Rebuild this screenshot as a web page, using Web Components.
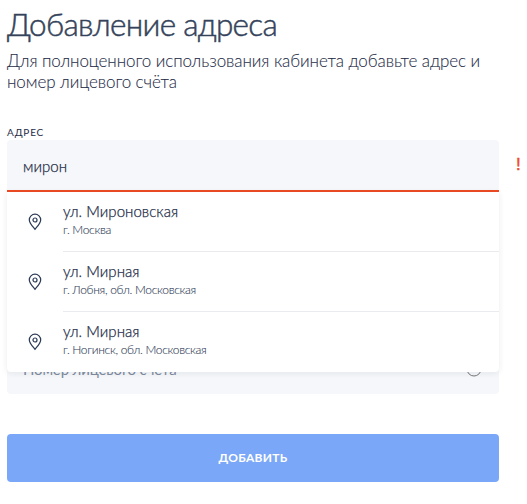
<!DOCTYPE html>
<html lang="ru">
<head>
<meta charset="utf-8">
<title>Добавление адреса</title>
<style>
  body{
    margin:0;
    background-color:#fff;
    color:#1f2d48;
    font-family:Lato, "Open Sans", sans-serif;
    font-weight:300;
  }
</style>
</head>
<body>
  <address-page>
    <page-heading slot="heading">
      Добавление адреса
      <span slot="text">Для полноценного использования кабинета добавьте адрес и номер лицевого счёта</span>
    </page-heading>
    <address-field label="Адрес" value="мирон">
      <address-option>ул. Мироновская<span slot="place">г. Москва</span></address-option>
      <address-option>ул. Мирная<span slot="place">г. Лобня, обл. Московская</span></address-option>
      <address-option>ул. Мирная<span slot="place">г. Ногинск, обл. Московская</span></address-option>
    </address-field>
    <account-field>Номер лицевого счёта</account-field>
    <submit-button slot="action">Добавить</submit-button>
  </address-page>

<script>
(function(w, doc) {
  'use strict';

  // registers an element whose shadow root is a clone of the markup
  function define(name, html, setup) {
    const template = doc.createElement('template');
    template.innerHTML = html;

    customElements.define(name, class extends HTMLElement {
      constructor() {
        super();
        this.attachShadow({ mode: 'open' });
        this.shadowRoot.appendChild(template.content.cloneNode(true));
      }

      connectedCallback() {
        if(setup) setup(this, this.shadowRoot);
      }
    });
  }

  define('address-page', `
    <style>
      :host{
        display:block;
        box-sizing:border-box;
        width:520px;
        padding:5px 21px 22px 7px;
      }
      form{
        display:flex;
        flex-direction:column;
      }
      .fields{
        margin-top:34px;
      }
      .action{
        margin-top:40px;
      }
    </style>
    <slot name="heading"></slot>
    <form>
      <div class="fields"><slot></slot></div>
      <div class="action"><slot name="action"></slot></div>
    </form>
`);

  define('page-heading', `
    <style>
      :host{
        display:block;
      }
      h1{
        margin:0;
        font-size:31.5px;
        font-weight:300;
        line-height:38px;
        letter-spacing:-0.7px;
        color:#34435a;
        -webkit-text-stroke:0.5px #34435a;
      }
      p{
        margin:7px 0 0;
        width:490px;
        font-size:17px;
        line-height:21px;
        letter-spacing:-0.08px;
        -webkit-text-stroke:0.1px #1f2d48;
      }
    </style>
    <h1><slot></slot></h1>
    <p><slot name="text"></slot></p>
`);

  define('address-field', `
    <style>
      :host{
        display:block;
      }
      label{
        display:block;
        height:14px;
        font-size:10px;
        font-weight:400;
        line-height:13px;
        letter-spacing:0.8px;
        text-transform:uppercase;
      }
      .box{
        position:relative;
        box-sizing:border-box;
        height:52px;
        border-bottom:2px solid #ee4b23;
        border-radius:4px 4px 0 0;
        background-color:#f5f7fa;
      }
      .value{
        padding:0 16px;
        font-size:15px;
        font-weight:300;
        line-height:52px;
        letter-spacing:0.05px;
        -webkit-text-stroke:0.25px #1f2d48;
      }
      .error{
        position:absolute;
        top:15px;
        left:509px;
        color:#ee4b23;
        -webkit-text-stroke:0.5px #ee4b23;
        font:17px/20px "Liberation Sans", sans-serif;
      }
      .list{
        position:absolute;
        top:52px;
        left:0;
        right:0;
        z-index:1;
        border-radius:0 0 4px 4px;
        background-color:#fff;
        box-shadow:0 1px 6px rgba(31,45,72,0.09);
      }
    </style>
    <label></label>
    <div class="box">
      <div class="value"></div>
      <div class="error">!</div>
      <div class="list"><slot></slot></div>
    </div>
`, function(host, root) {
    root.querySelector('label').innerText = host.getAttribute('label');
    root.querySelector('.value').innerText = host.getAttribute('value');
  });

  define('address-option', `
    <style>
      :host{
        display:flex;
        height:60px;
      }
      :host(:last-child) .text{
        border-bottom-color:transparent;
      }
      .icon{
        display:flex;
        align-items:center;
        justify-content:center;
        width:56px;
      }
      .text{
        box-sizing:border-box;
        flex:1;
        padding-top:9px;
        border-bottom:1px solid #e9ebee;
      }
      .street{
        margin-bottom:1px;
        font-size:15px;
        font-weight:300;
        line-height:20px;
        letter-spacing:0.05px;
        -webkit-text-stroke:0.25px #1f2d48;
      }
      .place{
        font-size:12px;
        line-height:16px;
        letter-spacing:-0.32px;
        color:#34435a;
        -webkit-text-stroke:0.1px #34435a;
      }
    </style>
    <div class="icon">
      <svg width="14" height="18" viewBox="0 0 14 18" fill="none" stroke="#2b3a55" stroke-width="1.2">
        <path d="M7 16.3C4.6 13.3 1.3 10 1.3 6.9a5.7 5.7 0 0 1 11.4 0C12.7 10 9.4 13.3 7 16.3z"/>
        <circle cx="7" cy="7" r="2"/>
      </svg>
    </div>
    <div class="text">
      <div class="street"><slot></slot></div>
      <div class="place"><slot name="place"></slot></div>
    </div>
`);

  define('account-field', `
    <style>
      :host{
        display:flex;
        align-items:center;
        justify-content:space-between;
        box-sizing:border-box;
        height:52px;
        margin-top:150px;
        padding:1px 17px 0 16px;
        border-radius:4px;
        background-color:#f5f7fa;
        font-size:15px;
        font-weight:400;
        letter-spacing:-0.15px;
        color:#7f8b9e;
      }
    </style>
    <slot></slot>
    <svg width="16" height="16" viewBox="0 0 16 16" fill="none" stroke="#777">
      <circle cx="8" cy="8" r="7"/>
      <path d="M8 7v4M8 4.5v1"/>
    </svg>
`);

  define('submit-button', `
    <style>
      :host{
        display:block;
      }
      button{
        display:block;
        width:100%;
        height:48px;
        padding:0 0 2px;
        border:none;
        border-radius:4px;
        background-color:#7aa7f7;
        color:white;
        font-family:inherit;
        font-size:12px;
        font-weight:700;
        letter-spacing:0.3px;
        text-transform:uppercase;
        cursor:pointer;
      }
    </style>
    <button type="submit"><slot></slot></button>
`);

})(window, document);
</script>
</body>
</html>
